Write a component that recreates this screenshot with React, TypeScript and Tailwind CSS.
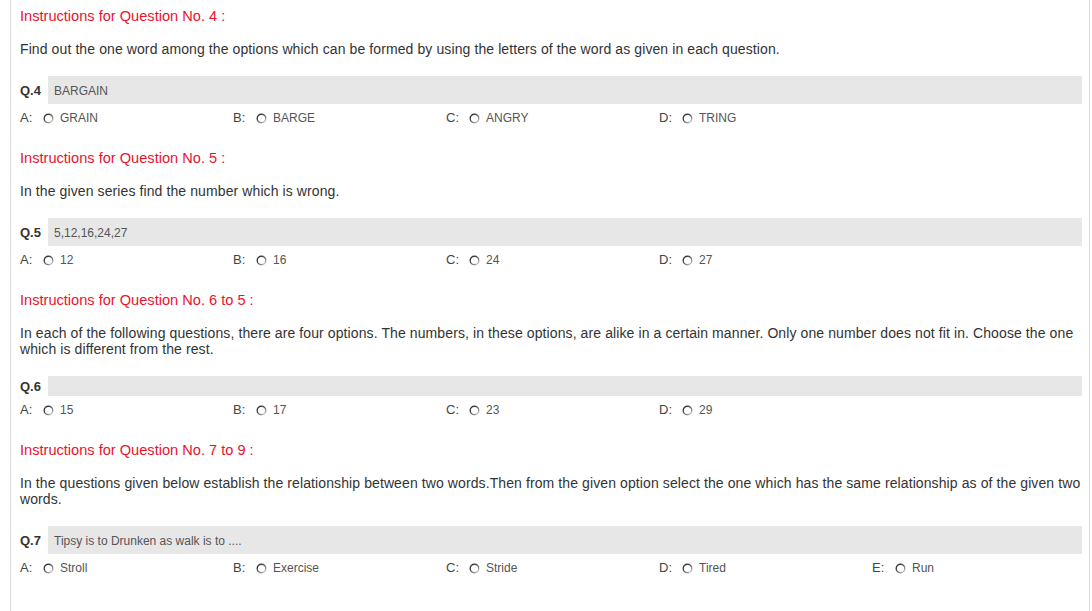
import React from "react";

type Question = {
  header: string;
  instructions: string;
  no: string;
  text: string;
  options: string[];
};

const questions: Question[] = [
  {
    header: "Instructions for Question No. 4 :",
    instructions:
      "Find out the one word among the options which can be formed by using the letters of the word as given in each question.",
    no: "Q.4",
    text: "BARGAIN",
    options: ["GRAIN", "BARGE", "ANGRY", "TRING"],
  },
  {
    header: "Instructions for Question No. 5 :",
    instructions: "In the given series find the number which is wrong.",
    no: "Q.5",
    text: "5,12,16,24,27",
    options: ["12", "16", "24", "27"],
  },
  {
    header: "Instructions for Question No. 6 to 5 :",
    instructions:
      "In each of the following questions, there are four options. The numbers, in these options, are alike in a certain manner. Only one number does not fit in. Choose the one which is different from the rest.",
    no: "Q.6",
    text: "",
    options: ["15", "17", "23", "29"],
  },
  {
    header: "Instructions for Question No. 7 to 9 :",
    instructions:
      "In the questions given below establish the relationship between two words.Then from the given option select the one which has the same relationship as of the given two words.",
    no: "Q.7",
    text: "Tipsy is to Drunken as walk is to ....",
    options: ["Stroll", "Exercise", "Stride", "Tired", "Run"],
  },
];

const letters = ["A", "B", "C", "D", "E"];

function Radio() {
  return (
    <svg width="11" height="11" viewBox="0 0 11 11" className="shrink-0">
      <defs>
        <linearGradient id="rg" x1="0" y1="0" x2="1" y2="1">
          <stop offset="0" stopColor="#222" />
          <stop offset="0.55" stopColor="#666" />
          <stop offset="1" stopColor="#e0e0e0" />
        </linearGradient>
      </defs>
      <circle cx="5.5" cy="5.5" r="4.3" fill="#fff" stroke="url(#rg)" strokeWidth="1.4" />
    </svg>
  );
}

export default function App() {
  return (
    <div className="min-h-screen bg-white" style={{ fontFamily: '"Liberation Sans", Arial, sans-serif' }}>
      <div className="ml-[10px] w-[1080px] min-h-screen border-x border-[#dcdcdc] pl-[9px] pr-[7px] pt-[6px]">
        {questions.map((q) => (
          <div key={q.no} className="mb-[22px]">
            <div className="text-[14.6px] leading-[20px] text-[#e8132e]">{q.header}</div>
            <div className="mt-[15px] text-[14px] tracking-[0.1px] leading-[16px] text-[#333]">
              {q.instructions}
            </div>
            <div className="mt-[19px] flex items-stretch">
              <div className="w-[28px] shrink-0 flex items-center text-[13px] leading-[16px] font-bold text-[#333]">
                <span className="pt-[1px]">{q.no}</span>
              </div>
              <div
                className={`flex-1 bg-[#e7e7e7] px-[6px] text-[12px] leading-[16px] text-[#555] ${
                  q.text ? "pt-[7px] pb-[5px]" : "h-[20px]"
                }`}
              >
                {q.text}
              </div>
            </div>
            <div className="mt-[6px] grid grid-cols-[repeat(5,213px)]">
              {q.options.map((opt, i) => (
                <div key={opt} className="flex items-center leading-[16px]">
                  <span className="text-[13px] text-[#444] w-[23px]">{letters[i]}:</span>
                  <Radio />
                  <span className="ml-[6px] text-[12px] text-[#555]">{opt}</span>
                </div>
              ))}
            </div>
          </div>
        ))}
      </div>
    </div>
  );
}
